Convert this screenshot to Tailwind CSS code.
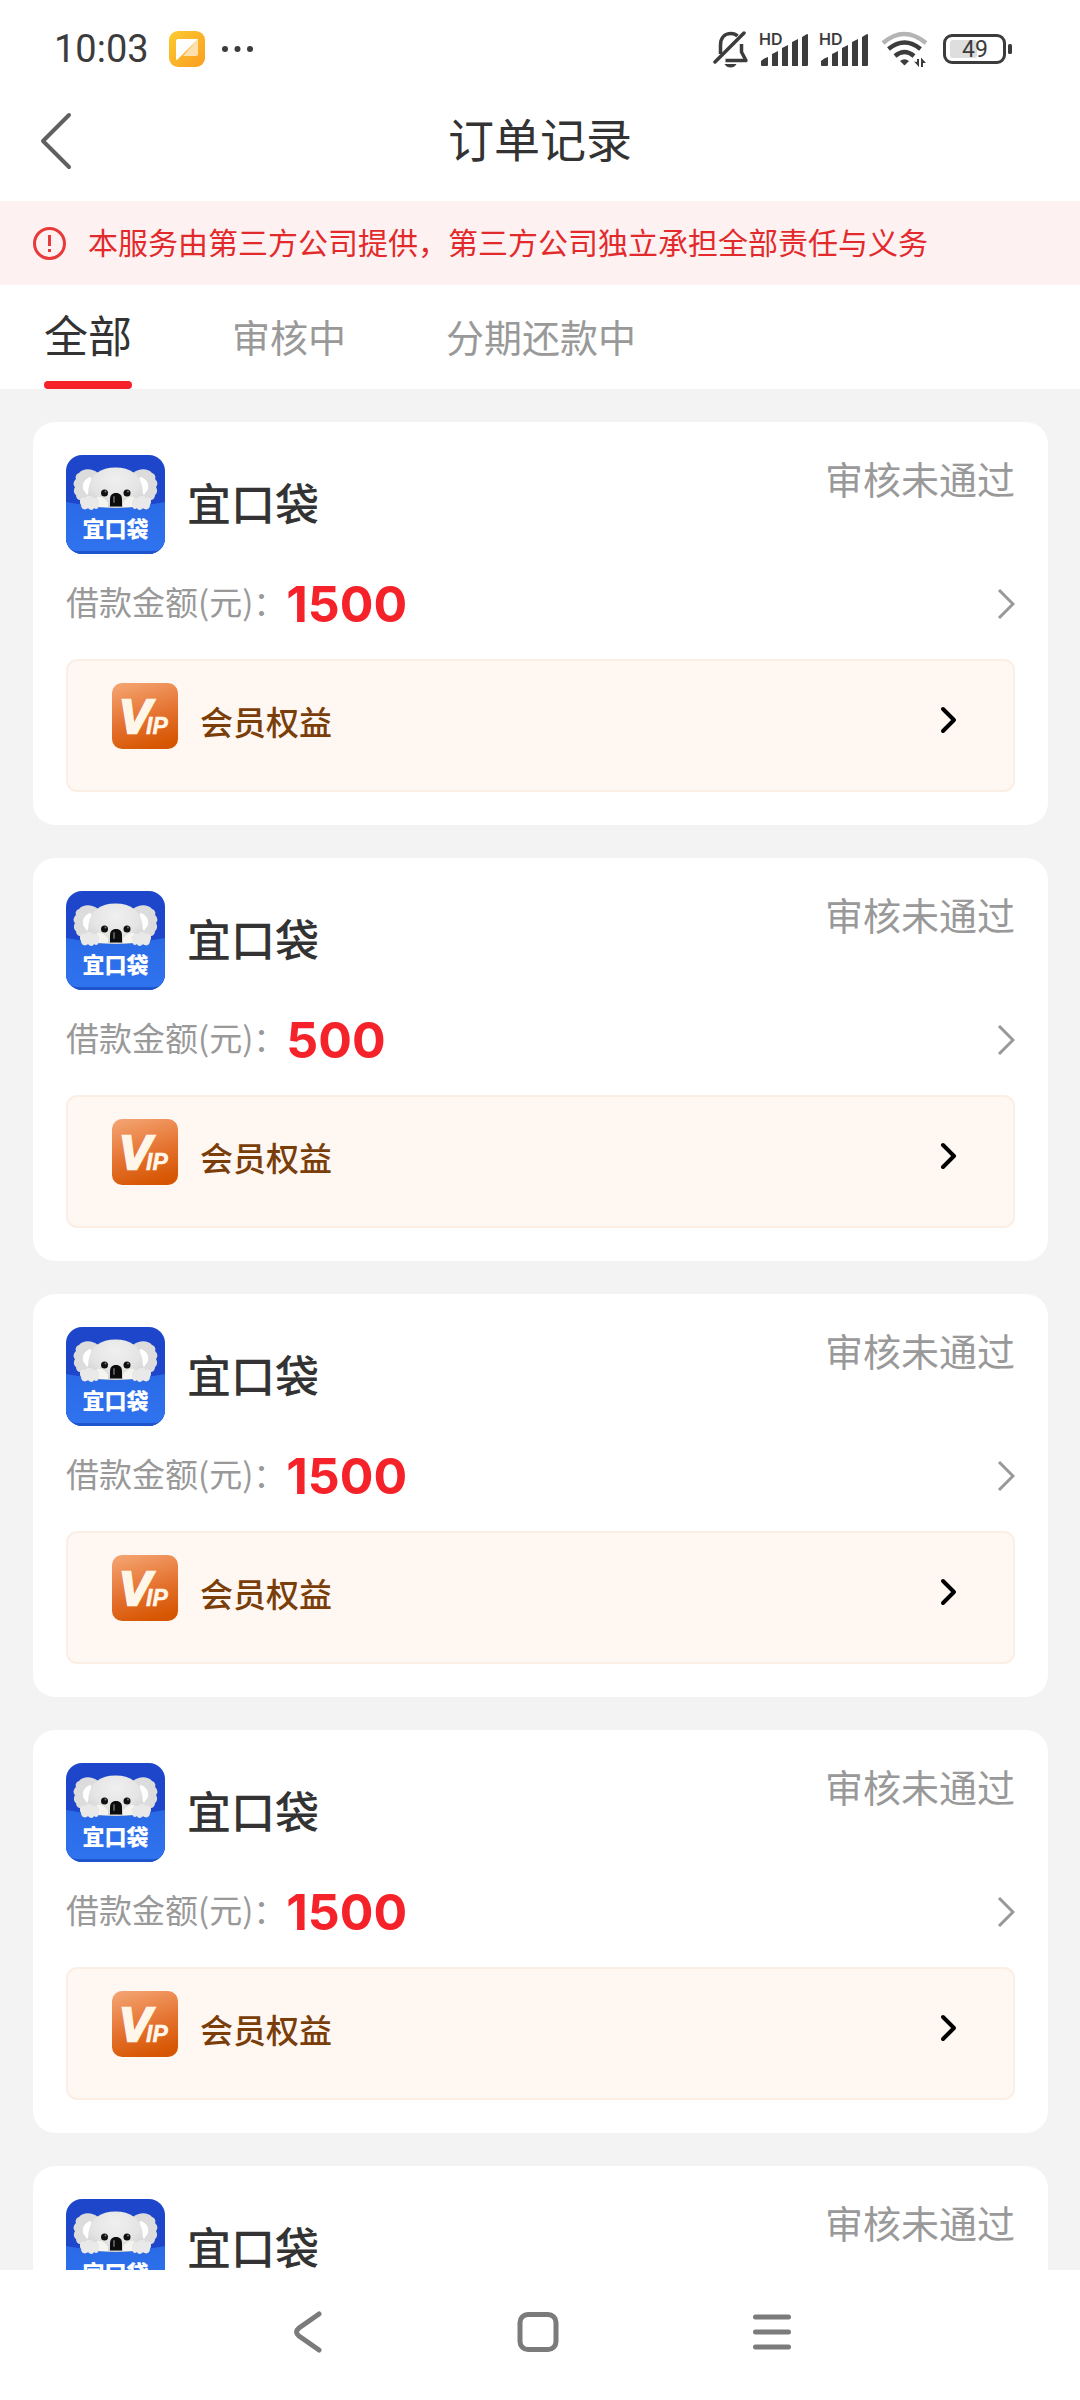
<!DOCTYPE html>
<html lang="zh-CN">
<head>
<meta charset="utf-8">
<meta name="viewport" content="width=device-width, initial-scale=1">
<title>订单记录</title>
<script src="https://cdn.jsdelivr.net/npm/@tailwindcss/browser@4"></script>
</head>
<body class="flex h-screen flex-col bg-white font-['Noto_Sans_CJK_SC',sans-serif] text-[#333]">

<!-- shared artwork -->
<svg width="0" height="0" class="absolute" aria-hidden="true">
  <defs>
    <linearGradient id="vipFill" x1="0.3" y1="0" x2="0.6" y2="1">
      <stop offset="0" stop-color="#f3a06c"/><stop offset="0.55" stop-color="#e4712e"/><stop offset="1" stop-color="#d65500"/>
    </linearGradient>
    <linearGradient id="panelFill" x1="0" y1="0" x2="0" y2="1">
      <stop offset="0" stop-color="#2a6ae6"/><stop offset="1" stop-color="#3073ee"/>
    </linearGradient>
    <radialGradient id="headFill" cx="0.5" cy="0.3" r="0.75">
      <stop offset="0" stop-color="#f0f0f0"/><stop offset="0.6" stop-color="#e4e4e4"/><stop offset="1" stop-color="#cfcfcf"/>
    </radialGradient>
    <clipPath id="logoClip"><rect width="99" height="99" rx="16"/></clipPath>
    <symbol id="koala" viewBox="0 0 99 99">
      <g clip-path="url(#logoClip)">
        <rect width="99" height="99" fill="#1d46cb"/>
        <path d="M0 99V47q50 10 99 0v52z" fill="#1f55cc"/>
        <path d="M0 47q50 10 99 0v40q-1 9-12 9H12q-11 0-12-9z" fill="url(#panelFill)"/>
        <path d="M32 18c-6-5-15-5-19 0-3 1-4 4-3 6-3 3-3 6-1 8-2 3-1 7 1 8 0 5 5 6 8 5l14 3z" fill="#dcdcdc"/>
        <path d="M67 18c6-5 15-5 19 0 3 1 4 4 3 6 3 3 3 6 1 8 2 3 1 7-1 8 0 5-5 6-8 5l-14 3z" fill="#dcdcdc"/>
        <path d="M25 22c-6 1-9 6-8 12l4 6 5-8z" fill="#fff"/>
        <path d="M74 22c6 1 9 6 8 12l-4 6-5-8z" fill="#fff"/>
        <path d="M49.500 12.500c15 0 25 7 27 21 1 9-3 15-8 18.500-12 1.200-25 1.200-38 0-5-3.500-9-9.500-8-18.500 2-14 12-21 27-21z" fill="url(#headFill)"/>
        <path d="M31 42q5-1 11 5v5h-11zM68 42q-5-1-11 5v5h11z" fill="#f6f4ef"/>
        <circle cx="38.500" cy="38" r="3.500" fill="#101010"/><circle cx="61" cy="38" r="3.500" fill="#101010"/>
        <circle cx="39.500" cy="36.500" r="1" fill="#777"/><circle cx="62" cy="36.500" r="1" fill="#777"/>
        <path d="M44 45c0-5 2-7 6-7s6 2 6 7v6.500H44z" fill="#0c0c0c"/>
        <rect x="47" y="41" width="2" height="7" rx="1" fill="#555"/>
        <path d="M15 50c-3-5 1-9 4-7 3-3 7-2 8 0 4-1 7 2 6 6 0 5-3 6-5 4-1 3-5 2-6 0-3 3-7 1-7-3z" fill="#e9e9e9"/>
        <path d="M84 50c3-5-1-9-4-7-3-3-7-2-8 0-4-1-7 2-6 6 0 5 3 6 5 4 1 3 5 2 6 0 3 3 7 1 7-3z" fill="#e9e9e9"/>
        <text x="49.500" y="82" text-anchor="middle" font-family="Noto Sans CJK SC, sans-serif" font-weight="900" font-size="22" fill="#fff">宜口袋</text>
      </g>
    </symbol>
    <symbol id="vip" viewBox="0 0 66 66">
      <rect width="66" height="66" rx="10" fill="url(#vipFill)"/>
      <g font-family="Liberation Sans, sans-serif" font-weight="700" font-style="italic" fill="#fff6ea" stroke="#fff6ea">
        <text x="7" y="50" font-size="48" stroke-width="2.500">V</text>
        <text x="34" y="51" font-size="23" stroke-width="0.500">IP</text>
      </g>
    </symbol>
    <symbol id="signal" viewBox="0 0 50 34">
      <text x="0" y="13" font-family="Inter, sans-serif" font-weight="600" font-size="16" fill="#3c3c3c">HD</text>
      <path d="M2 33v-4q3-3 7-4v8q0 1-1 1H3q-1 0-1-1zM13 34V22l6-3v15zM23 34V16l6-3v21zM33 34V10l6-3v27zM43 34V5l5-3q1 0 1 1v30q0 1-1 1z" fill="#3c3c3c"/>
    </symbol>
  </defs>
</svg>

<!-- system status bar -->
<div class="flex h-20 shrink-0 items-center pt-[18px] pr-[67px] pl-[54px]">
  <span class="font-[Roboto,sans-serif] text-[38px] leading-none text-[#3c3c3c]">10:03</span>
  <svg class="ml-5 size-9" viewBox="0 0 36 36" aria-hidden="true">
    <defs><linearGradient id="noteFill" x1="0" y1="0" x2="1" y2="1"><stop offset="0" stop-color="#fbcb2e"/><stop offset="1" stop-color="#fb9d22"/></linearGradient></defs>
    <rect width="36" height="36" rx="9" fill="url(#noteFill)"/>
    <path d="M29 8v15q0 2-2 2H14z" fill="#fde0b0"/>
    <path d="M7 10q0-2 2-2h20L9 28q-2 2-2 0z" fill="#fff"/>
  </svg>
  <svg class="ml-4 h-2 w-8" viewBox="0 0 32 8" fill="#3c3c3c" aria-hidden="true"><circle cx="4" cy="4" r="3"/><circle cx="16.500" cy="4" r="3"/><circle cx="29" cy="4" r="3"/></svg>
  <div class="ml-auto flex items-center">
    <svg class="h-[38px] w-9" viewBox="0 0 36 38" fill="none" stroke="#3c3c3c" stroke-width="3.500" role="img" aria-label="静音">
      <path d="M7.500 24V15c0-7 4-11.500 10.500-11.500 2.500 0 5 1 6.500 2.500M28.500 14v8l4.500 8.500H12.500" stroke-linejoin="round"/>
      <path d="M31 3 2 32" stroke-linecap="round"/>
      <path d="M11.500 34h12q-2 3.500-6 3.500t-6-3.500z" fill="#3c3c3c" stroke="none"/>
    </svg>
    <svg class="ml-[10px] h-[34px] w-[50px]" role="img" aria-label="HD"><use href="#signal"/></svg>
    <svg class="ml-[10px] h-[34px] w-[50px]" role="img" aria-label="HD"><use href="#signal"/></svg>
    <svg class="ml-3 h-9 w-12" viewBox="0 0 48 36" fill="none" stroke="#3c3c3c" stroke-width="4.500" role="img" aria-label="Wi-Fi">
      <path d="M2 12q21-18 43 0" stroke="#b4b4b4"/>
      <path d="M7.500 18q16-13 32 0M14 25q9.500-8 19 0"/>
      <path d="M19 30q4.500-3.500 9 0l-4.500 4.500z" fill="#3c3c3c" stroke="none"/>
      <path d="M33 30.500 38 36v-8h-2v3zM45 32l-5-5.500V36h2v-4z" fill="#3c3c3c" stroke="none"/>
    </svg>
    <svg class="ml-[14px] h-[30px] w-[70px]" viewBox="0 0 70 30" role="img" aria-label="电量 49%">
      <rect x="7" y="6" width="27" height="18" rx="3" fill="#dedede"/>
      <rect x="1.500" y="1.500" width="60" height="27" rx="7.500" fill="none" stroke="#3c3c3c" stroke-width="3"/>
      <rect x="65" y="10" width="4" height="10" rx="1.500" fill="#3c3c3c"/>
      <text x="32" y="23" text-anchor="middle" font-family="Roboto, sans-serif" font-size="23" fill="#3c3c3c">49</text>
    </svg>
  </div>
</div>

<!-- page header -->
<header class="grid h-[121px] shrink-0 grid-cols-[1fr_auto_1fr] items-center px-10">
  <button type="button" aria-label="返回" class="justify-self-start">
    <svg class="h-[58px] w-8" viewBox="0 0 32 58" fill="none" stroke="#606060" stroke-width="4" stroke-linecap="round" stroke-linejoin="round"><path d="M29 3 3 29l26 26"/></svg>
  </button>
  <h1 class="pb-2 text-[46px] leading-none">订单记录</h1>
</header>

<div class="flex h-21 shrink-0 items-center gap-[22px] bg-[#fef1f1] px-[33px] text-[#e22a2c]" role="note">
  <svg class="size-[33px] shrink-0" viewBox="0 0 33 33" fill="none" stroke="#e8393b" stroke-width="3" aria-hidden="true"><circle cx="16.500" cy="16.500" r="15"/><path d="M16.500 8v11M16.500 22v3"/></svg>
  <p class="pb-1 text-[30px] leading-none">本服务由第三方公司提供，第三方公司独立承担全部责任与义务</p>
</div>

<nav class="flex h-26 shrink-0 gap-[100px] px-11 text-[38px] leading-none text-[#999]" role="tablist">
  <button type="button" role="tab" aria-selected="true" class="relative pb-[6px] text-[44px] text-[#333]">全部<span class="absolute inset-x-0 bottom-0 h-2 rounded-full bg-[#f5222a]"></span></button>
  <button type="button" role="tab" aria-selected="false" class="pb-[2px]">审核中</button>
  <button type="button" role="tab" aria-selected="false" class="pb-[2px]">分期还款中</button>
</nav>

<main id="orders" class="flex min-h-0 flex-1 flex-col gap-[33px] overflow-y-auto bg-[#f3f3f3] pt-[33px] pr-8 pl-[33px] [scrollbar-width:none]"></main>

<template id="order-card">
  <article class="shrink-0 rounded-[22px] bg-white p-[33px]">
    <div class="flex items-center gap-[22px]">
      <svg class="size-[99px] shrink-0" role="img" aria-label="宜口袋"><use href="#koala"/></svg>
      <h2 class="pb-[6px] text-[44px] leading-none font-medium">宜口袋</h2>
      <span class="ml-auto self-start text-[38px] leading-[46px] text-[#999]">审核未通过</span>
    </div>
    <div class="mb-[5px] flex h-[100px] items-center">
      <span class="pb-[6px] text-[33px] leading-none text-[#999]">借款金额(元)：</span>
      <strong class="amount font-[Inter,sans-serif] text-[50px] leading-none font-bold text-[#f5222a]"></strong>
      <button type="button" aria-label="查看订单" class="ml-auto">
        <svg class="h-[30px] w-[18px]" viewBox="0 0 18 30" fill="none" stroke="#999" stroke-width="3"><path d="m2 1 14 14L2 29"/></svg>
      </button>
    </div>
    <a href="#vip-benefits" class="flex h-[133px] items-start gap-[22px] rounded-[11px] border-2 border-[#fbeee5] bg-[#fff7f1] py-[22px] pr-[54px] pl-11">
      <svg class="size-[66px] shrink-0" role="img" aria-label="VIP"><use href="#vip"/></svg>
      <span class="text-[33px] leading-[76px] font-medium text-[#7a3e0a]">会员权益</span>
      <svg class="mt-[22px] ml-auto h-[30px] w-5" viewBox="0 0 20 30" fill="none" stroke="#000" stroke-width="4" stroke-linecap="round" stroke-linejoin="round" aria-hidden="true"><path d="m4 4 11 11L4 26"/></svg>
    </a>
  </article>
</template>

<!-- system navigation -->
<nav class="grid h-[130px] shrink-0 grid-cols-[1fr_auto_1fr] items-center gap-[192px] bg-white pr-1 pb-[6px]" aria-label="系统导航">
  <button type="button" aria-label="返回" class="justify-self-end"><svg class="h-11 w-8" viewBox="0 0 32 44" fill="none" stroke="#7b7b7b" stroke-width="5" stroke-linecap="round"><path d="M27 4 7 18q-5 4 0 8l20 14"/></svg></button>
  <button type="button" aria-label="主屏幕"><svg class="size-11" viewBox="0 0 44 44" fill="none" stroke="#7b7b7b" stroke-width="5"><rect x="4" y="4.500" width="36" height="35" rx="8"/></svg></button>
  <button type="button" aria-label="最近任务" class="justify-self-start"><svg class="h-11 w-10" viewBox="0 0 40 44" stroke="#7b7b7b" stroke-width="5" stroke-linecap="round"><path d="M3.500 7h33M3.500 22h33M3.500 37h33"/></svg></button>
</nav>

<script>
  const list = document.getElementById('orders');
  const card = document.getElementById('order-card');
  for (const amount of [1500, 500, 1500, 1500, 1500]) {
    const node = card.content.cloneNode(true);
    node.querySelector('.amount').textContent = amount;
    list.append(node);
  }
</script>
</body>
</html>
